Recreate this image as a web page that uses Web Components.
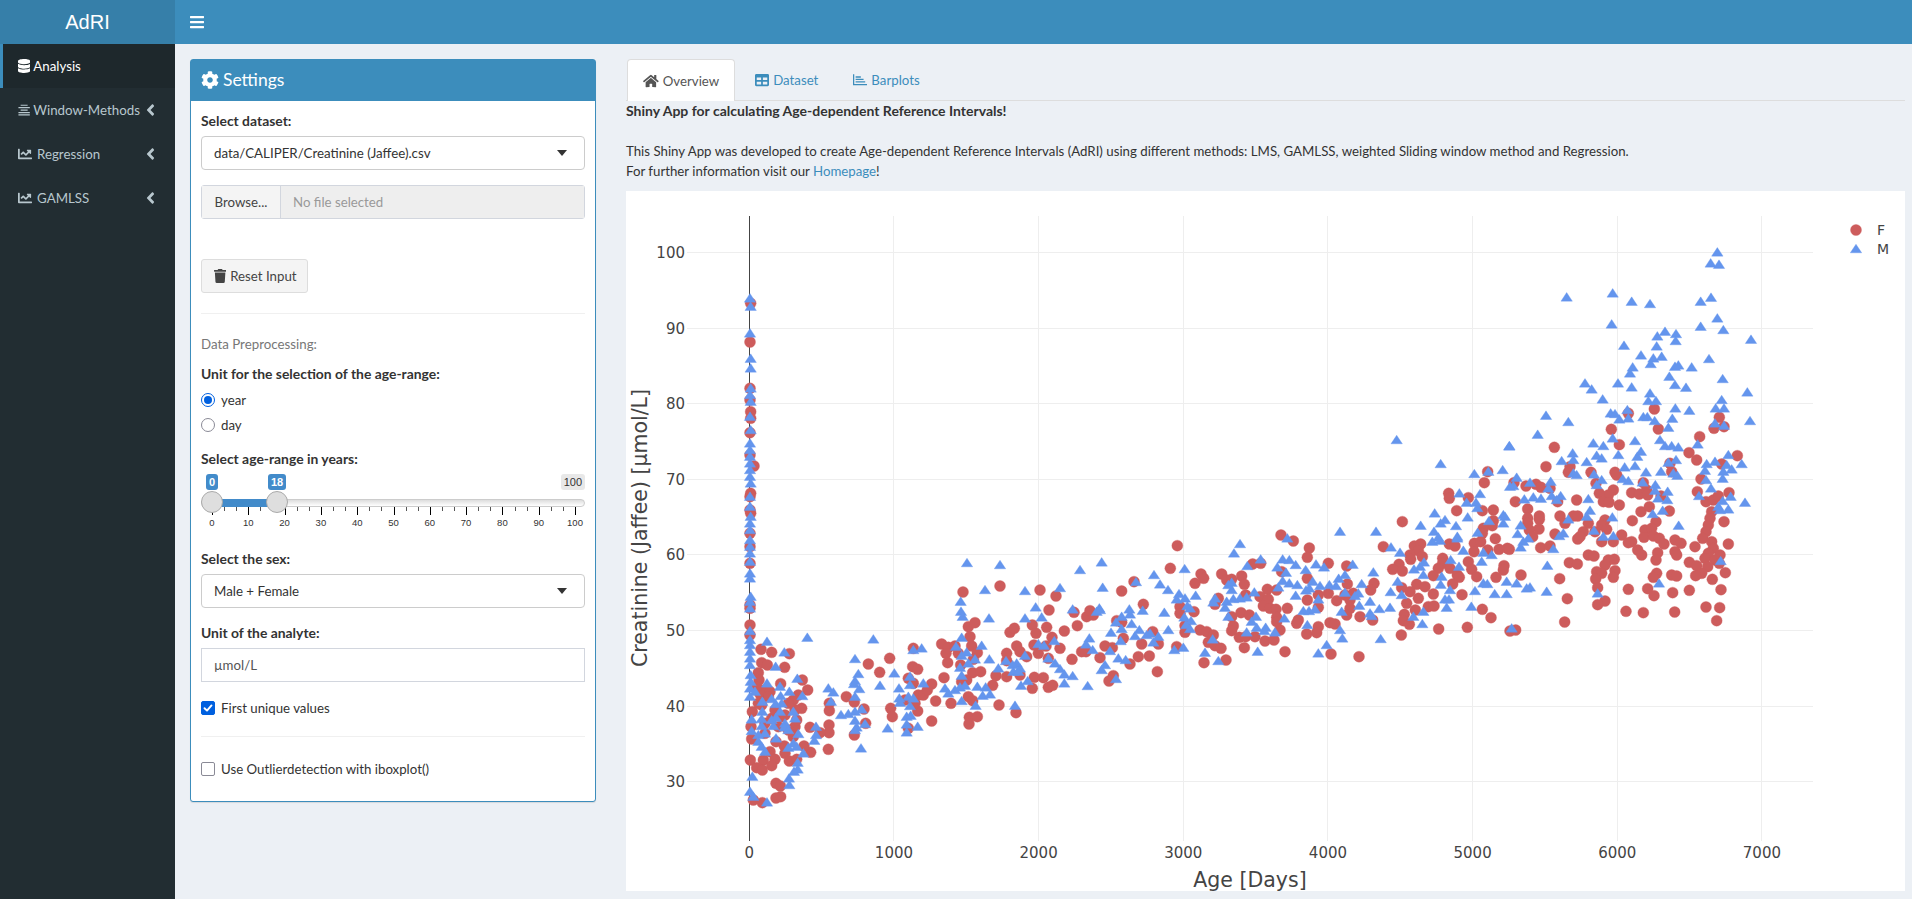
<!DOCTYPE html>
<html>
<head>
<meta charset="utf-8">
<title>AdRI</title>
<style>
  html, body { margin: 0; height: 100%; overflow: hidden; background: #ecf0f5; }
  body { font: 13.25px/20px Lato, "Liberation Sans", sans-serif; color: #333; }
</style>
</head>
<body>
<adri-app></adri-app>
<script>
const ICONS = {
  database: [448, "M448 73.143v45.714C448 159.143 347.667 192 224 192S0 159.143 0 118.857V73.143C0 32.857 100.333 0 224 0s224 32.857 224 73.143zM448 176v102.857C448 319.143 347.667 352 224 352S0 319.143 0 278.857V176c48.125 33.143 136.208 48.572 224 48.572S399.874 209.143 448 176zm0 160v102.857C448 479.143 347.667 512 224 512S0 479.143 0 438.857V336c48.125 33.143 136.208 48.572 224 48.572S399.874 369.143 448 336z"],
  bars: [448, "M16 132h416c8.837 0 16-7.163 16-16V76c0-8.837-7.163-16-16-16H16C7.163 60 0 67.163 0 76v40c0 8.837 7.163 16 16 16zm0 160h416c8.837 0 16-7.163 16-16v-40c0-8.837-7.163-16-16-16H16c-8.837 0-16 7.163-16 16v40c0 8.837 7.163 16 16 16zm0 160h416c8.837 0 16-7.163 16-16v-40c0-8.837-7.163-16-16-16H16c-8.837 0-16 7.163-16 16v40c0 8.837 7.163 16 16 16z"],
  angle: [256, "M31.7 239l136-136c9.4-9.4 24.6-9.4 33.9 0l22.6 22.6c9.4 9.4 9.4 24.6 0 33.9L127.9 256l96.4 96.4c9.4 9.4 9.4 24.6 0 33.9L201.7 409c-9.4 9.4-24.6 9.4-33.9 0l-136-136c-9.5-9.4-9.5-24.6-.1-34z"],
  line: [512, "M496 384H64V80c0-8.84-7.16-16-16-16H16C7.16 64 0 71.16 0 80v336c0 17.67 14.33 32 32 32h464c8.84 0 16-7.16 16-16v-32c0-8.84-7.16-16-16-16zM464 96H345.94c-21.38 0-32.09 25.85-16.97 40.97l32.4 32.4L288 242.75l-73.37-73.37c-12.5-12.5-32.76-12.5-45.25 0l-68.69 68.69c-6.25 6.25-6.25 16.38 0 22.63l22.62 22.62c6.25 6.25 16.38 6.25 22.63 0L192 237.25l73.37 73.37c12.5 12.5 32.76 12.5 45.25 0l96-96 32.4 32.4c15.12 15.12 40.97 4.41 40.97-16.97V112c.01-8.84-7.15-16-15.99-16z"],
  align: [448, "M96 60h256v44H96zM16 150h416v44H16zM96 240h256v44H96zM16 330h416v44H16zM16 410h416v44H16z"],
  cog: [512, "M487.4 315.7l-42.6-24.6c4.3-23.2 4.3-47 0-70.2l42.6-24.6c4.9-2.8 7.1-8.6 5.5-14-11.1-35.6-30-67.8-54.7-94.6-3.8-4.1-10-5.1-14.8-2.3L380.8 110c-17.9-15.4-38.5-27.3-60.8-35.1V25.8c0-5.6-3.9-10.5-9.4-11.7-36.7-8.2-74.3-7.8-109.2 0-5.5 1.2-9.4 6.1-9.4 11.7V75c-22.2 7.9-42.8 19.8-60.8 35.1L88.7 85.5c-4.9-2.8-11-1.9-14.8 2.3-24.7 26.7-43.6 58.9-54.7 94.6-1.7 5.4.6 11.2 5.5 14L67.3 221c-4.3 23.2-4.3 47 0 70.2l-42.6 24.6c-4.9 2.8-7.1 8.6-5.5 14 11.1 35.6 30 67.8 54.7 94.6 3.8 4.1 10 5.1 14.8 2.3l42.6-24.6c17.9 15.4 38.5 27.3 60.8 35.1v49.2c0 5.6 3.9 10.5 9.4 11.7 36.7 8.2 74.3 7.8 109.2 0 5.5-1.2 9.4-6.1 9.4-11.7v-49.2c22.2-7.9 42.8-19.8 60.8-35.1l42.6 24.6c4.9 2.8 11 1.9 14.8-2.3 24.7-26.7 43.6-58.9 54.7-94.6 1.5-5.5-.7-11.3-5.6-14.1zM256 336c-44.1 0-80-35.9-80-80s35.9-80 80-80 80 35.9 80 80-35.9 80-80 80z"],
  trash: [448, "M432 32H312l-9.4-18.7A24 24 0 0 0 281.1 0H166.8a23.72 23.72 0 0 0-21.4 13.3L136 32H16A16 16 0 0 0 0 48v32a16 16 0 0 0 16 16h416a16 16 0 0 0 16-16V48a16 16 0 0 0-16-16zM53.2 467a48 48 0 0 0 47.9 45h245.8a48 48 0 0 0 47.9-45L416 128H32z"],
  home: [576, "M280.37 148.26L96 300.11V464a16 16 0 0 0 16 16l112.06-.29a16 16 0 0 0 15.92-16V368a16 16 0 0 1 16-16h64a16 16 0 0 1 16 16v95.64a16 16 0 0 0 16 16.05L464 480a16 16 0 0 0 16-16V300L295.67 148.26a12.19 12.19 0 0 0-15.3 0zM571.6 251.47L488 182.56V44.05a12 12 0 0 0-12-12h-56a12 12 0 0 0-12 12v72.61L318.47 43a48 48 0 0 0-61 0L4.34 251.47a12 12 0 0 0-1.6 16.9l25.5 31A12 12 0 0 0 45.15 301l235.22-193.74a12.19 12.19 0 0 1 15.3 0L530.9 301a12 12 0 0 0 16.9-1.6l25.5-31a12 12 0 0 0-1.7-16.93z"],
  table: [512, "M464 32H48C21.49 32 0 53.49 0 80v352c0 26.51 21.49 48 48 48h416c26.51 0 48-21.49 48-48V80c0-26.51-21.49-48-48-48zM224 416H64v-96h160v96zm0-160H64v-96h160v96zm224 160H288v-96h160v96zm0-160H288v-96h160v96z"],
  barplot: [512, "M0 50h46v354h466v46H0zM96 120h190v50H96zM96 210h290v50H96zM96 300h350v50H96z"],
};

function icon(name, h = 14) {
  const [w, d] = ICONS[name];
  return `<svg width="${(h * w) / 512}" height="${h}" viewBox="0 0 ${w} 512" fill="currentColor" style="display:block;flex:none"><path d="${d}"/></svg>`;
}

class AdriHeader extends HTMLElement {
  constructor() {
    super();
    this.attachShadow({ mode: "open" });
    this.shadowRoot.innerHTML = `
      <style>
        :host { display: flex; height: 44px; background: #3c8dbc; color: #fff; }
        .brand {
          width: 175px;
          background: #367fa9;
          text-align: center;
          font: 20px/44px "Liberation Sans", sans-serif;
        }
        .toggle { display: flex; align-items: center; padding-left: 15px; }
      </style>
      <div class="brand">AdRI</div>
      <div class="toggle">${icon("bars", 16)}</div>
    `;
  }
}

class SideItem extends HTMLElement {
  connectedCallback() {
    this.attachShadow({ mode: "open" });
    const active = this.hasAttribute("active");
    this.shadowRoot.innerHTML = `
      <style>
        :host {
          display: flex;
          align-items: center;
          position: relative;
          height: 44px;
          padding-left: 15px;
          border-left: 3px solid transparent;
          color: #b8c7ce;
          font-size: 13.3px;
        }
        :host([active]) { background: #1e282c; border-left-color: #3c8dbc; color: #fff; }
        .label { margin-left: ${this.getAttribute("gap") || 3}px; }
        .chev { position: absolute; left: 142.5px; top: 13px; }
      </style>
      ${icon(this.getAttribute("icon"), 14)}
      <span class="label"><slot></slot></span>
      ${active ? "" : `<span class="chev">${icon("angle", 18)}</span>`}
    `;
  }
}

class AdriSidebar extends HTMLElement {
  constructor() {
    super();
    this.attachShadow({ mode: "open" });
    this.shadowRoot.innerHTML = `
      <style>
        :host { display: block; width: 175px; background: #222d32; }
      </style>
      <side-item icon="database" active>Analysis</side-item>
      <side-item icon="align">Window-Methods</side-item>
      <side-item icon="line" gap="5">Regression</side-item>
      <side-item icon="line" gap="5">GAMLSS</side-item>
    `;
  }
}

class AdriBox extends HTMLElement {
  constructor() {
    super();
    this.attachShadow({ mode: "open" });
    this.shadowRoot.innerHTML = `
      <style>
        :host {
          display: block;
          width: 406px;
          box-sizing: border-box;
          border: 1px solid #3c8dbc;
          border-radius: 3px;
          background: #fff;
          box-shadow: 0 1px 1px rgba(0,0,0,.1);
        }
        .head {
          display: flex;
          align-items: center;
          gap: 4px;
          height: 39px;
          padding: 0 0 2px 10px;
          background: #3c8dbc;
          color: #fff;
          font-size: 17.5px;
        }
        .body { padding: 0 10px; }
      </style>
      <div class="head">${icon("cog", 18)}<span>Settings</span></div>
      <div class="body"><slot></slot></div>
    `;
  }
}

class PickBox extends HTMLElement {
  connectedCallback() {
    this.attachShadow({ mode: "open" });
    this.shadowRoot.innerHTML = `
      <style>
        :host {
          display: flex;
          align-items: center;
          justify-content: space-between;
          height: 34px;
          box-sizing: border-box;
          padding: 0 17px 0 12px;
          border: 1px solid #ccc;
          border-radius: 4px;
          background: #fff;
          font-size: 13.3px;
        }
        i { width: 0; height: 0; border: 5.5px solid transparent; border-top: 6px solid #333; border-bottom: 0; }
      </style>
      <span><slot></slot></span><i></i>
    `;
  }
}

class FilePick extends HTMLElement {
  constructor() {
    super();
    this.attachShadow({ mode: "open" });
    this.shadowRoot.innerHTML = `
      <style>
        :host {
          display: flex;
          height: 34px;
          box-sizing: border-box;
          border: 1px solid #d2d6de;
          border-radius: 3px;
          font-size: 13.25px;
        }
        .btn { width: 78px; background: #f4f4f4; border-right: 1px solid #d2d6de; text-align: center; line-height: 32px; color: #444; }
        .name { flex: 1; background: #eee; padding-left: 12px; line-height: 32px; color: #999; }
      </style>
      <div class="btn">Browse...</div>
      <div class="name">No file selected</div>
    `;
  }
}

class ResetButton extends HTMLElement {
  constructor() {
    super();
    this.attachShadow({ mode: "open" });
    this.shadowRoot.innerHTML = `
      <style>
        :host {
          display: inline-flex;
          align-items: center;
          gap: 4px;
          width: 107px;
          height: 34px;
          box-sizing: border-box;
          padding-left: 12px;
          border: 1px solid #ddd;
          border-radius: 3px;
          background: #f4f4f4;
          color: #444;
          font-size: 13.25px;
        }
      </style>
      ${icon("trash", 14)}<span>Reset Input</span>
    `;
  }
}

class OptionRow extends HTMLElement {
  connectedCallback() {
    this.attachShadow({ mode: "open" });
    const radio = this.getAttribute("type") === "radio";
    const on = this.hasAttribute("checked");
    let mark = "";
    if (radio && on) mark = `<span class="dot"></span>`;
    if (!radio && on) mark = `<svg width="10" height="10" viewBox="0 0 10 10" fill="none" stroke="#fff" stroke-width="1.9" stroke-linecap="round" stroke-linejoin="round"><path d="M1.5 5.2 4 7.6 8.5 2.4"/></svg>`;
    this.shadowRoot.innerHTML = `
      <style>
        :host { display: flex; align-items: center; gap: 6px; height: 25px; }
        .mark {
          display: flex;
          align-items: center;
          justify-content: center;
          width: 14px;
          height: 14px;
          box-sizing: border-box;
          border: 1px solid #8a8a96;
          border-radius: ${radio ? "50%" : "2px"};
          background: #fff;
        }
        .mark.on { border-color: #0060df; }
        .mark.box.on { background: #0060df; }
        .dot { width: 8px; height: 8px; border-radius: 50%; background: #0060df; }
        .text { font-size: 13.25px; }
      </style>
      <span class="mark ${radio ? "" : "box"} ${on ? "on" : ""}">${mark}</span>
      <span class="text"><slot></slot></span>
    `;
  }
}

class AgeSlider extends HTMLElement {
  constructor() {
    super();
    this.attachShadow({ mode: "open" });
    const x = (v) => 11 + v * 3.63;
    let ticks = "";
    for (let v = 0; v <= 100; v += 10) {
      ticks += `<b class="big" style="left:${x(v)}px"></b><span class="num" style="left:${x(v)}px">${v}</span>`;
      if (v < 100) {
        ticks += `<b class="small" style="left:${x(v + 10 / 3)}px"></b><b class="small" style="left:${x(v + 20 / 3)}px"></b>`;
      }
    }
    this.shadowRoot.innerHTML = `
      <style>
        :host {
          display: block;
          position: relative;
          height: 60px;
          font-family: "Liberation Sans", sans-serif;
        }
        .tag {
          position: absolute;
          top: 0;
          height: 16px;
          padding: 0 3px;
          border-radius: 3px;
          background: #428bca;
          color: #fff;
          font-size: 11px;
          font-weight: bold;
          line-height: 16px;
        }
        .tag.max { right: 0; background: #e8e8e8; color: #333; font-weight: normal; }
        .track {
          position: absolute;
          left: 0;
          right: 0;
          top: 25px;
          height: 8px;
          box-sizing: border-box;
          border: 1px solid #ccc;
          border-radius: 8px;
          background: linear-gradient(#ddd, #fff);
        }
        .fill { position: absolute; left: 11px; width: 65px; top: 25px; height: 8px; background: #428bca; }
        .handle {
          position: absolute;
          top: 17px;
          width: 22px;
          height: 22px;
          box-sizing: border-box;
          border: 1px solid #aaa;
          border-radius: 50%;
          background: #dedede;
        }
        b { position: absolute; top: 33px; width: 1px; background: #000; }
        .big { height: 8px; }
        .small { height: 4px; background: #555; }
        .num {
          position: absolute;
          top: 43px;
          transform: translateX(-50%);
          font-size: 9.5px;
          line-height: 12px;
          color: #333;
        }
      </style>
      <div class="track"></div>
      <div class="fill"></div>
      ${ticks}
      <div class="tag" style="left:5px">0</div>
      <div class="tag" style="left:67px">18</div>
      <div class="tag max">100</div>
      <div class="handle" style="left:0"></div>
      <div class="handle" style="left:65px"></div>
    `;
  }
}

class SettingsPanel extends HTMLElement {
  constructor() {
    super();
    this.attachShadow({ mode: "open" });
    this.shadowRoot.innerHTML = `
      <style>
        :host { display: block; }
        label { display: block; font-weight: 700; font-size: 13.9px; line-height: 20px; margin-bottom: 5px; }
        hr { border: 0; border-top: 1px solid #f0f0f0; margin: 0; }
        .note { color: #777; font-size: 13.3px; line-height: 20px; }
        .unit {
          height: 34px;
          box-sizing: border-box;
          padding-left: 12px;
          border: 1px solid #d2d6de;
          color: #555;
          font-size: 13.25px;
          line-height: 32px;
        }
      </style>
      <adri-box>
        <label style="margin-top:10px">Select dataset:</label>
        <pick-box>data/CALIPER/Creatinine (Jaffee).csv</pick-box>
        <file-pick style="margin-top:15px"></file-pick>
        <reset-button style="margin-top:40px"></reset-button>
        <hr style="margin-top:20px">
        <div class="note" style="margin-top:20px">Data Preprocessing:</div>
        <label style="margin-top:10px;margin-bottom:3px">Unit for the selection of the age-range:</label>
        <option-row type="radio" checked>year</option-row>
        <option-row type="radio">day</option-row>
        <label style="margin-top:12px">Select age-range in years:</label>
        <age-slider></age-slider>
        <label style="margin-top:15px">Select the sex:</label>
        <pick-box>Male + Female</pick-box>
        <label style="margin-top:15px">Unit of the analyte:</label>
        <div class="unit">µmol/L</div>
        <option-row type="check" checked style="margin-top:13px">First unique values</option-row>
        <hr style="margin-top:16px">
        <option-row type="check" style="margin-top:19px;margin-bottom:20px">Use Outlierdetection with iboxplot()</option-row>
      </adri-box>
    `;
  }
}

class TabStrip extends HTMLElement {
  constructor() {
    super();
    this.attachShadow({ mode: "open" });
    this.shadowRoot.innerHTML = `
      <style>
        :host {
          display: flex;
          gap: 5px;
          height: 42px;
          box-sizing: border-box;
          padding-left: 1px;
          border-bottom: 1px solid #ddd;
          font-size: 13.25px;
          color: #3c8dbc;
        }
        .tab { display: flex; align-items: center; gap: 4px; height: 41px; box-sizing: border-box; padding: 0 15px; }
        .on {
          height: 42px;
          background: #fff;
          border: 1px solid #ddd;
          border-bottom: 0;
          border-radius: 4px 4px 0 0;
          color: #555;
        }
      </style>
      <div class="tab on">${icon("home", 14)}<span>Overview</span></div>
      <div class="tab">${icon("table", 14)}<span>Dataset</span></div>
      <div class="tab">${icon("barplot", 14)}<span>Barplots</span></div>
    `;
  }
}

class IntroText extends HTMLElement {
  constructor() {
    super();
    this.attachShadow({ mode: "open" });
    this.shadowRoot.innerHTML = `
      <style>
        :host { display: block; font-size: 13.25px; line-height: 20px; }
        p { margin: 0 0 20px; font-weight: 700; font-size: 14px; }
        a { color: #3c8dbc; text-decoration: none; }
      </style>
      <p>Shiny App for calculating Age-dependent Reference Intervals!</p>
      <div>This Shiny App was developed to create Age-dependent Reference Intervals (AdRI) using different methods: LMS, GAMLSS, weighted Sliding window method and Regression.</div>
      <div>For further information visit our <a href="#">Homepage</a>!</div>
    `;
  }
}

// marker positions read off the reference; each block is [offsetX, offsetY, circles, triangles], values are 3x crop pixels
const MARKS = [
  [745, 620,
    [15,15,15,45,48,88,80,97,133,101,50,128,67,135,119,142,40,158,42,180,172,180,107,191,188,210,60,210,75,215,45,222,35,200,70,230,160,225,145,240,130,250,170,265,150,270,50,255,22,275,253,250,253,272,304,230,328,246,357,267,370,132,404,157,434,115,505,85,503,140,518,148,490,175,505,190,437,265,442,290,518,273,252,315,252,338,195,322,225,338,362,310,328,345,250,388,197,397,177,378,118,378,120,400,150,320,130,330,100,320,18,320,60,310,20,357,93,365,75,395,55,420,90,418,16,420,35,443,52,450,80,437,133,423,155,418,93,490,106,498,93,534,107,530,25,540,52,548,80,295,110,290,155,300,40,250,90,270,120,285,145,350,60,340,490,325,520,225,535,225,510,250,480,240],
    [187,53,385,58,66,65,15,33,15,60,15,75,15,95,118,97,15,115,15,135,92,140,330,117,340,162,448,160,495,170,505,90,530,85,17,165,17,185,66,190,157,176,330,183,327,192,405,197,495,195,535,190,15,205,30,215,105,200,250,205,343,207,462,205,133,215,265,217,15,230,107,228,172,228,330,230,490,230,505,235,463,235,52,245,80,237,258,245,465,248,92,252,110,250,495,258,350,268,330,275,288,285,310,282,52,275,105,275,145,275,485,290,497,287,20,298,50,297,93,293,150,295,80,300,330,302,360,312,120,310,20,333,50,318,85,318,118,322,60,340,130,330,213,320,335,322,428,325,518,320,485,313,485,337,330,330,160,342,213,345,40,345,93,355,40,365,208,362,145,370,50,380,130,383,155,380,348,385,60,395,175,400,158,428,158,448,147,455,132,475,133,495,22,470,15,515,25,530,66,547]],
  [620, 600,
    [965,132,985,142,1005,138,1015,160,978,160,983,188,1022,195,1045,80,1065,68,1050,110,1055,138,1072,158,1060,178,1058,218,1082,215,972,233,935,252,922,270,947,303,993,310,935,363,1025,245,1040,240,1045,290,1058,302,1048,352,1072,350,1047,372,1137,315,1118,256,1128,227,1160,160,1160,182,1170,97,1183,85,1190,138,1200,155,1220,170,1237,75,1248,100,1242,135,1280,82,1296,112,1287,30,1278,138,1255,160,1285,175,1243,232,1270,233,1237,265,1285,262,1298,256,1320,145,1333,93,1372,77,1362,37,1356,178,1385,155,1398,155,1400,50,1420,45,1410,32,1160,230,1200,225,1188,338],
    [1022,5,1023,35,1028,50,1107,55,1025,113,1085,137,1008,140,1040,157,1025,167,1065,178,1108,178,1045,190,1020,203,1135,205,1158,183,1190,190,1178,195,1200,205,1180,215,1195,215,1025,227,975,265,1005,270,985,280,1020,262,1035,257,1072,260,1097,262,1088,287,1110,283,1025,303,1067,317,1185,317,1203,257,1223,243,1215,55,1265,52,1247,22,1358,28,1215,167,1255,132,1272,137,1303,123,1285,175,1305,190,1320,207,1333,223,1333,250,1358,228,1408,115,1398,133,1418,150,1403,258,1430,35,1438,25]],
  [1100, 480,
    [232,197,211,265,303,282,311,295,285,310,102,305,65,333,130,373,365,282,380,300,395,298,425,288,433,313,458,252,482,250,543,165,580,183,628,204,622,232,685,250,740,258,545,275,622,295,530,330,502,328,742,312,480,350,505,358,490,378,510,385,528,388,562,385,437,345,355,355,345,373,240,380,240,400,282,395,395,410,423,398,448,405,530,412,540,450,530,425,595,420,590,430,622,360,655,382,655,345,685,340,710,362,735,345,750,385,740,405,690,428,705,432,655,440,650,458,620,462,400,438,395,452,418,472,437,470,465,470,495,483,522,480,433,503,555,515,693,522,300,450,320,455,340,465,325,487,345,497,363,505,378,540,312,548,255,437,255,457,230,500,172,575,148,528,115,530,90,552,40,587,27,603,15,498,37,503,0,533,125,492,175,492,158,455,70,475,50,422,65,427],
    [420,192,402,220,562,175,720,155,5,247,254,267,162,285,180,313,204,330,108,306,8,323,287,347,237,342,255,355,230,358,345,355,340,367,375,383,380,365,400,357,420,355,440,352,463,337,395,330,385,315,395,308,442,258,482,238,532,262,548,238,568,240,587,255,558,278,617,270,648,253,672,262,735,285,716,296,638,305,548,303,568,310,592,315,535,322,628,325,618,331,660,318,688,315,708,318,735,338,587,347,655,358,725,395,610,393,627,393,645,388,553,415,468,410,385,410,455,425,470,443,497,443,493,453,525,457,440,457,622,435,720,450,727,475,680,495,655,520,473,515,315,518,355,543,338,478,250,503,223,510,262,378,270,385,253,412,273,423,258,435,270,447,193,398,128,392,88,388,90,403,65,410,48,427,95,432,65,447,33,458,118,450,205,450,150,460,140,465,175,470,160,487,105,468,62,483,30,513,55,535,77,540,15,555,5,570,48,597,0,390]],
  [1350, 440,
    [613,22,588,80,660,80,655,97,413,95,403,128,492,128,528,138,558,133,573,142,600,145,296,160,298,175,355,173,496,185,623,185,680,180,320,212,397,212,430,210,533,207,533,235,533,250,568,228,568,238,567,267,630,228,645,250,670,228,683,228,157,245,430,242,427,257,400,265,397,280,538,270,548,290,615,282,683,297,436,296,100,320,193,318,212,312,205,332,298,312,315,318,373,310,392,305,372,335,447,328,472,325,478,328,572,323,600,318,180,345,182,358,217,350,278,355,278,370,265,385,147,373,128,388,157,393,250,407,300,385,322,405,328,412,355,365,365,388,380,410,462,377,460,390,438,412,513,405,658,368,682,372,629,416,308,432,200,433,155,443,180,455,225,440,250,462,205,475,170,490,336,464,235,500,252,498,196,510,397,508,423,533,163,523,160,542,178,553,266,567,352,562,154,585,480,573,497,570,644,546,652,476,72,430,62,450,30,530,68,540,27,650,10,460,0,480,413,330],
    [140,0,478,18,668,40,635,63,670,60,272,72,373,102,415,95,458,90,670,100,680,105,500,113,540,128,602,125,490,138,480,140,595,145,328,160,390,162,350,188,378,188,382,204,523,178,550,172,573,176,605,168,632,168,620,180,254,220,353,232,460,225,465,230,285,240,272,250,460,250,417,243,212,257,318,258,512,256,655,238,78,275,252,275,383,278,265,292,322,290,322,295,503,282,535,295,640,280,628,288,247,305,270,302,520,305,512,322,123,322,150,338,340,332,610,327,400,338,425,345,395,365,222,367,302,360,327,380,210,380,192,388,8,374,70,397,592,377,220,405,275,410,143,425,35,432,272,434,400,430,412,432,470,425,500,430,540,442,530,445,300,450,122,456,155,465,375,453,434,462,470,462,590,455,25,460,15,468,60,485,28,497,285,478,297,478,120,503,88,507,290,503,364,500,220,515,60,520,65,528,190,530,217,552,485,565,92,597]],
  [1580, 440,
    [118,14,327,38,350,60,472,47,425,72,105,97,110,105,33,97,48,130,190,128,363,117,100,150,85,165,58,160,70,185,87,187,118,195,155,158,178,162,200,150,203,165,243,168,270,70,275,95,352,155,378,185,400,180,415,168,447,158,183,215,208,200,268,213,395,215,390,235,385,255,378,275,368,295,432,245,157,242,228,245,75,240,65,255,80,268,45,275,25,250,10,275,0,290,195,270,215,265,192,292,220,288,238,295,252,312,125,285,155,305,145,308,65,305,100,305,285,300,303,310,345,320,445,312,395,305,400,325,385,340,375,355,420,345,405,360,173,330,185,345,233,338,228,360,285,335,290,345,25,345,42,348,103,358,85,360,75,375,105,392,50,395,65,400,47,417,100,412,328,367,350,377,383,380,365,400,347,407,418,370,230,400,220,412,275,405,290,408,436,398,397,418,145,448,203,446,53,443,222,467,278,458,328,451,423,449,75,483,53,494,378,501,419,503,138,514,190,518,284,516,410,542],
    [40,10,70,18,165,3,240,0,255,18,275,18,295,22,353,13,50,47,65,55,115,45,20,66,165,78,172,50,183,35,265,68,288,60,380,72,405,65,445,45,485,72,440,75,455,88,430,95,134,82,198,97,243,95,375,92,280,100,292,107,128,117,145,123,42,103,65,120,50,135,188,127,378,120,428,116,226,135,225,152,263,155,393,145,357,168,452,170,234,175,262,180,25,177,428,183,495,188,415,200,445,208,420,210,30,212,248,212,218,222,97,232,20,230,296,257,42,272,70,290,100,288,422,363,237,430,53,460]],
  [1400, 270,
    [763,417,685,430,958,442,942,475,972,470,775,477,634,478,899,500],
    [500,82,638,70,695,95,750,102,902,95,933,83,635,163,952,145,902,170,970,180,1053,209,672,227,795,185,828,192,772,199,827,213,770,229,723,256,760,265,785,260,752,282,825,290,835,286,875,292,927,267,698,292,690,310,808,320,968,327,555,340,575,358,654,340,695,352,825,345,858,353,1042,367,750,370,608,388,745,393,768,393,965,390,826,415,868,422,947,415,972,415,682,420,632,430,645,432,658,448,685,445,730,441,742,441,764,453,817,446,438,437,505,456,1050,453,945,460,972,467,805,473,413,494,638,505,328,529]],
  [1600, 190, [], [352,187,332,220,357,224]],
  [730, 280,
    [62,70,60,186,60,325,60,360,62,395,62,415,60,458,60,525,72,558,60,650,60,690,62,700,60,760,60,800,60,850,60,975,60,985,62,640],
    [60,55,62,80,60,160,62,236,62,265,62,325,60,345,62,365,60,410,62,450,60,490,60,510,60,530,60,550,60,570,60,590,62,610,60,650,60,680,62,710,60,730,60,750,60,780,60,800,60,820,60,845,60,880,60,895,62,950,60,965,60,985]],
  [0, 0,
    [2889,1776,3000,1758,3120,1770,3168,1788],
    [2901,1689,3000,1695,2955,1770,3075,1773,3180,1764,3240,1710]],
];

class ScatterPlot extends HTMLElement {
  constructor() {
    super();
    this.attachShadow({ mode: "open" });
    // drawn in page coordinates, the host starts at 626,191
    const X = (d) => 749.3 + d * 0.14466;
    const Y = (v) => 781.7 - (v - 30) * 7.56;
    const crisp = (n) => Math.floor(n) + 0.5;
    let grid = "";
    let labels = "";
    for (let v = 30; v <= 100; v += 10) {
      grid += `<path d="M687 ${crisp(Y(v))}H1813" stroke="#eee"/>`;
      labels += `<text x="685" y="${Y(v) + 5.5}" text-anchor="end">${v}</text>`;
    }
    for (let d = 0; d <= 7000; d += 1000) {
      if (d) grid += `<path d="M${crisp(X(d))} 216V841" stroke="#eee"/>`;
      labels += `<text x="${X(d)}" y="858" text-anchor="middle">${d}</text>`;
    }
    const circle = (x, y) => `<circle cx="${x}" cy="${y}" r="5.5"/>`;
    const tri = (x, y) => `<path d="M${x - 5.7} ${y + 3.8}L${x} ${y - 4.8}L${x + 5.7} ${y + 3.8}Z"/>`;
    let cs = "";
    let ts = "";
    for (const [ox, oy, c, t] of MARKS) {
      for (let i = 0; i < c.length; i += 2) cs += circle(ox + c[i] / 3, oy + c[i + 1] / 3);
      for (let i = 0; i < t.length; i += 2) ts += tri(ox + t[i] / 3, oy + t[i + 1] / 3);
    }
    this.shadowRoot.innerHTML = `
      <style>
        :host { display: block; width: 1279px; height: 700px; background: #fff; }
        svg { display: block; }
        text { font-family: "DejaVu Sans", sans-serif; fill: #444; }
      </style>
      <svg width="1279" height="700" viewBox="626 191 1279 700">
        ${grid}
        <path d="M749.5 216V841" stroke="#444"/>
        <g font-size="15">${labels}</g>
        <text x="1250" y="887" text-anchor="middle" font-size="20.5">Age [Days]</text>
        <text transform="translate(647 528) rotate(-90)" text-anchor="middle" font-size="20.5">Creatinine (Jaffee) [µmol/L]</text>
        <g fill="#cd5c5c" stroke="#cd5c5c" stroke-opacity=".35">${cs}</g>
        <g fill="#6495ed" stroke="#6495ed" stroke-opacity=".35">${ts}</g>
        <g fill="#cd5c5c" stroke="#cd5c5c" stroke-opacity=".35">${circle(1856, 230)}</g>
        <g fill="#6495ed" stroke="#6495ed" stroke-opacity=".35">${tri(1856, 249)}</g>
        <text x="1877" y="235" font-size="14">F</text>
        <text x="1877" y="254" font-size="14">M</text>
      </svg>
    `;
  }
}

class AdriApp extends HTMLElement {
  constructor() {
    super();
    this.attachShadow({ mode: "open" });
    this.shadowRoot.innerHTML = `
      <style>
        :host { display: flex; flex-direction: column; height: 899px; }
        .row { display: flex; flex: 1; }
        adri-sidebar { flex: none; }
        .left { width: 406px; margin: 15px 0 0 15px; }
        .right { margin: 15px 0 0 30px; width: 1279px; }
        scatter-plot { margin-top: 10px; }
      </style>
      <adri-header></adri-header>
      <div class="row">
        <adri-sidebar></adri-sidebar>
        <div class="left"><settings-panel></settings-panel></div>
        <div class="right">
          <tab-strip></tab-strip>
          <intro-text></intro-text>
          <scatter-plot></scatter-plot>
        </div>
      </div>
    `;
  }
}

customElements.define("adri-header", AdriHeader);
customElements.define("side-item", SideItem);
customElements.define("adri-sidebar", AdriSidebar);
customElements.define("adri-box", AdriBox);
customElements.define("pick-box", PickBox);
customElements.define("file-pick", FilePick);
customElements.define("reset-button", ResetButton);
customElements.define("option-row", OptionRow);
customElements.define("age-slider", AgeSlider);
customElements.define("settings-panel", SettingsPanel);
customElements.define("tab-strip", TabStrip);
customElements.define("intro-text", IntroText);
customElements.define("scatter-plot", ScatterPlot);
customElements.define("adri-app", AdriApp);
</script>
</body>
</html>
